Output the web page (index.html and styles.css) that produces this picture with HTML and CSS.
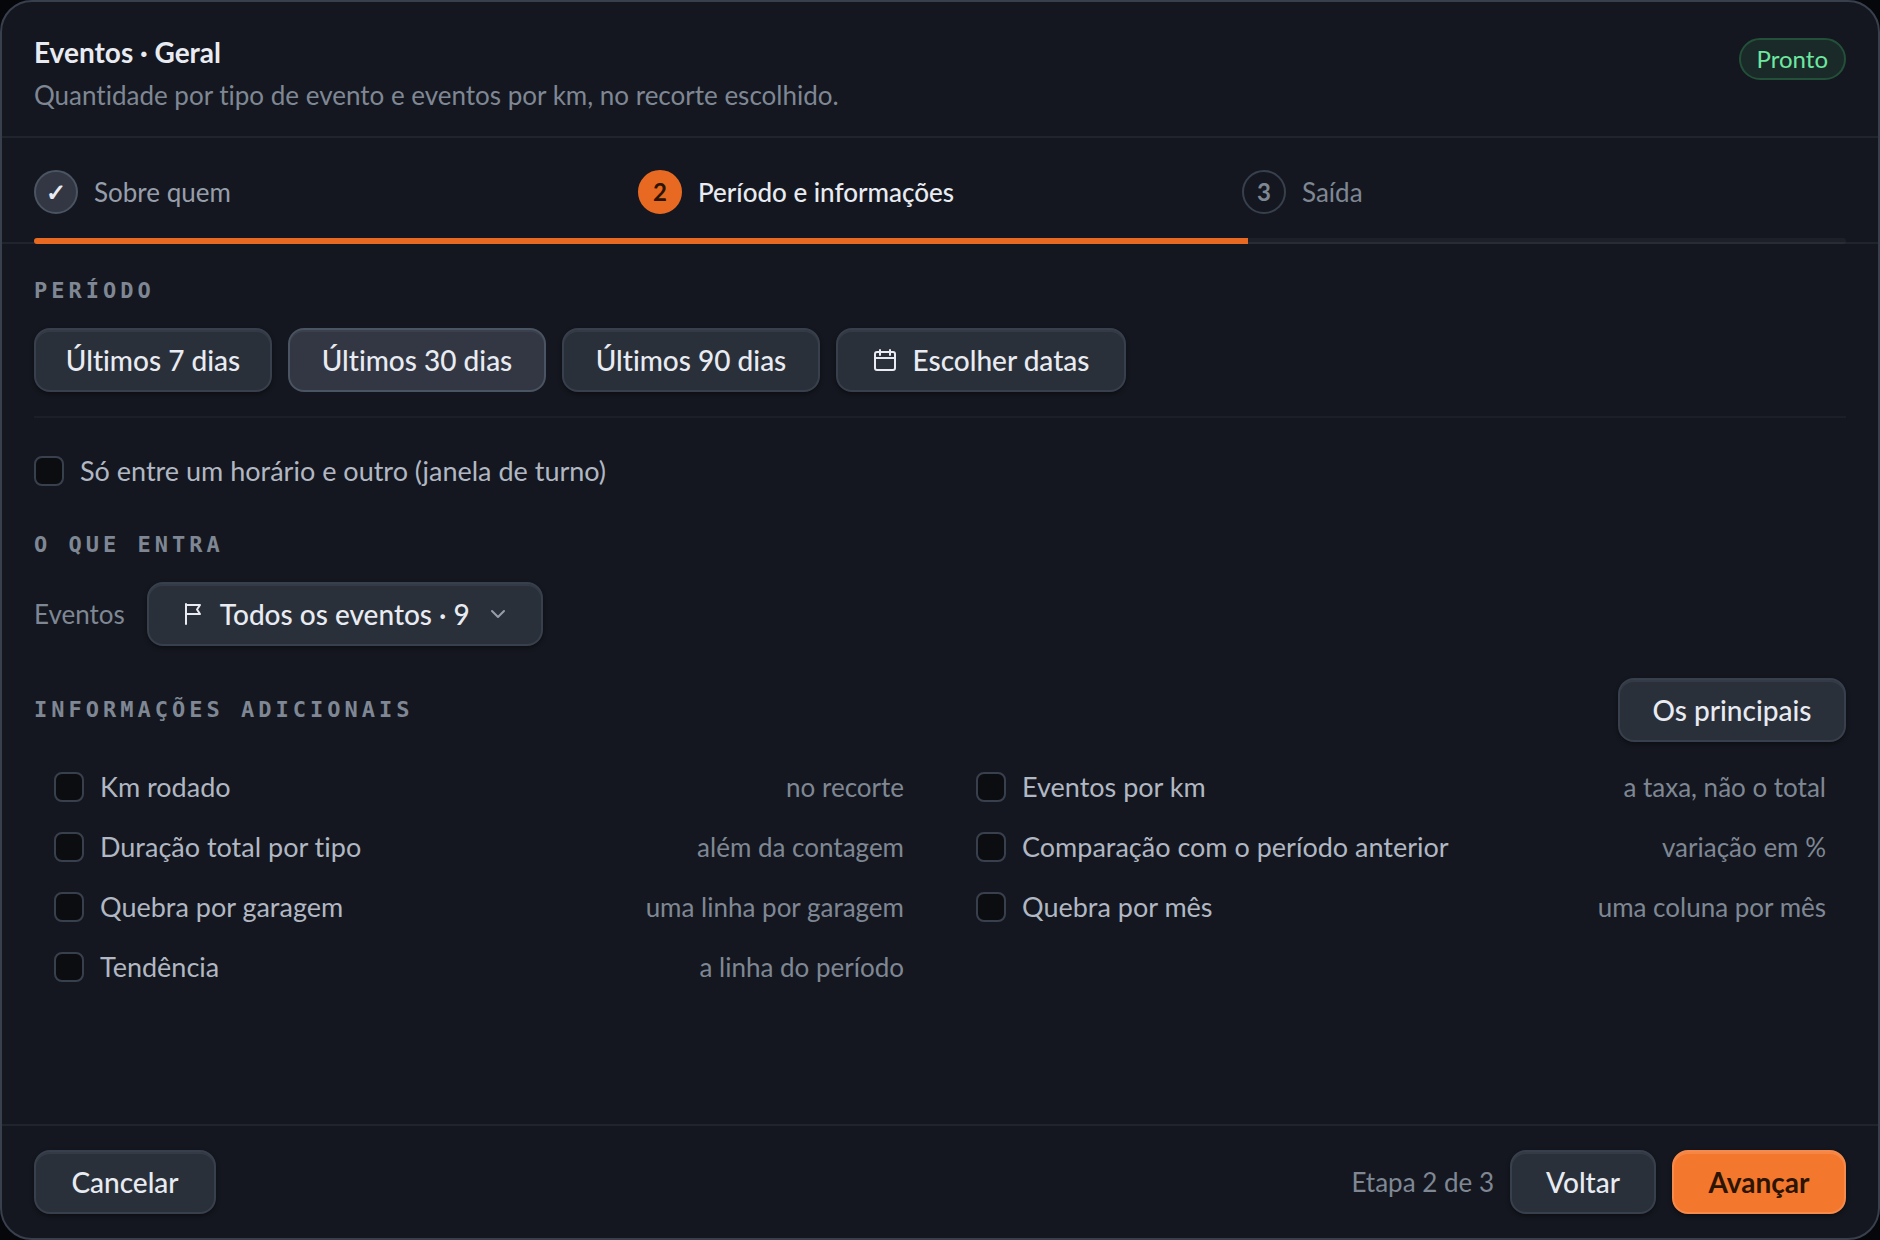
FILE: index.html
```html
<!DOCTYPE html>
<html lang="pt-BR">
<head>
<meta charset="utf-8">
<meta name="viewport" content="width=device-width, initial-scale=1">
<title>Eventos · Geral</title>
<link rel="stylesheet" href="styles.css">
</head>
<body>
<section class="dialog" role="dialog" aria-labelledby="dialog-title">
  <header class="dialog-header">
    <div class="heading">
      <h1 class="title" id="dialog-title">Eventos · Geral</h1>
      <p class="subtitle">Quantidade por tipo de evento e eventos por km, no recorte escolhido.</p>
    </div>
    <span class="badge">Pronto</span>
  </header>

  <nav class="stepper" aria-label="Etapas">
    <ol class="steps">
      <li class="step step-done"><span class="step-mark">✓</span><span>Sobre quem</span></li>
      <li class="step step-current" aria-current="step"><span class="step-mark">2</span><span>Período e informações</span></li>
      <li class="step step-next"><span class="step-mark">3</span><span>Saída</span></li>
    </ol>
    <div class="progress"><div class="progress-fill" style="width: 67%"></div></div>
  </nav>

  <main class="content">
    <section class="period">
      <h2 class="label">Período</h2>
      <div class="button-row">
        <button type="button" class="btn btn-week">Últimos 7 dias</button>
        <button type="button" class="btn btn-range btn-selected" aria-pressed="true">Últimos 30 dias</button>
        <button type="button" class="btn btn-range">Últimos 90 dias</button>
        <button type="button" class="btn btn-dates">
          <svg class="icon" viewBox="0 0 24 24" aria-hidden="true"><rect x="2" y="4" width="20" height="18" rx="2"/><path d="M2 10h20M7 2v5M17 2v5"/></svg>
          Escolher datas
        </button>
      </div>
    </section>

    <label class="check shift"><input type="checkbox" class="box"><span>Só entre um horário e outro (janela de turno)</span></label>

    <section class="included">
      <h2 class="label">O que entra</h2>
      <div class="field">
        <span class="muted" id="events-label">Eventos</span>
        <button type="button" class="btn btn-menu" aria-haspopup="listbox" aria-describedby="events-label">
          <svg class="icon" viewBox="0 0 24 24" aria-hidden="true"><path d="M6 2v20M6 3h14l-3 4.500 3 4.500H6"/></svg>
          <span>Todos os eventos · 9</span>
          <svg class="icon icon-soft" viewBox="0 0 24 24" aria-hidden="true"><path d="M6 9l6 6 6-6"/></svg>
        </button>
      </div>
    </section>

    <section class="extras">
      <div class="extras-head">
        <h2 class="label">Informações adicionais</h2>
        <button type="button" class="btn btn-main-set">Os principais</button>
      </div>
      <div class="options">
        <label class="check option"><input type="checkbox" class="box"><span>Km rodado</span><span class="hint">no recorte</span></label>
        <label class="check option"><input type="checkbox" class="box"><span>Eventos por km</span><span class="hint">a taxa, não o total</span></label>
        <label class="check option"><input type="checkbox" class="box"><span>Duração total por tipo</span><span class="hint">além da contagem</span></label>
        <label class="check option"><input type="checkbox" class="box"><span>Comparação com o período anterior</span><span class="hint">variação em %</span></label>
        <label class="check option"><input type="checkbox" class="box"><span>Quebra por garagem</span><span class="hint">uma linha por garagem</span></label>
        <label class="check option"><input type="checkbox" class="box"><span>Quebra por mês</span><span class="hint">uma coluna por mês</span></label>
        <label class="check option"><input type="checkbox" class="box"><span>Tendência</span><span class="hint">a linha do período</span></label>
      </div>
    </section>
  </main>

  <footer class="dialog-footer">
    <button type="button" class="btn btn-action">Cancelar</button>
    <div class="footer-actions">
      <span class="muted">Etapa 2 de 3</span>
      <button type="button" class="btn btn-back">Voltar</button>
      <button type="button" class="btn btn-primary">Avançar</button>
    </div>
  </footer>
</section>
</body>
</html>
```
FILE: styles.css
```css
:root {
  --surface: #14171f;
  --line: #20242d;
  --border: #39404d;
  --control: #2a3039;
  --text: #e8ebf1;
  --text-soft: #b1b7c3;
  --text-muted: #7f8794;
  --accent: #e86a22;
}

* { box-sizing: border-box; }

body {
  margin: 0;
  background: #06070a;
  color: var(--text-soft);
  font-family: Lato, "Open Sans", sans-serif;
  font-size: 26px;
  font-variant-ligatures: none;
  line-height: 32px;
}

h1, h2, p, ol { margin: 0; padding: 0; }

.dialog {
  display: flex;
  flex-direction: column;
  min-height: 100vh;
  background: var(--surface);
  border: 2px solid var(--border);
  border-radius: 32px;
}

.dialog-header {
  display: flex;
  justify-content: space-between;
  align-items: flex-start;
  padding: 32px 32px 24px;
  border-bottom: 2px solid var(--line);
}

.heading { display: grid; gap: 8px; }

.title {
  color: var(--text);
  font-size: 28px;
  font-weight: 700;
  line-height: 36px;
}

.subtitle { line-height: 34px; }
.subtitle, .muted { color: var(--text-muted); }

.badge {
  margin-top: 4px;
  padding: 4px 16px;
  border: 2px solid #235039;
  border-radius: 21px;
  background: #1a2a28;
  color: #6ee7a0;
  font-size: 24px;
  line-height: 30px;
}

.stepper {
  padding: 32px 32px 0;
  border-bottom: 2px solid var(--line);
}

.steps {
  display: grid;
  grid-template-columns: repeat(3, 1fr);
  list-style: none;
}

.step {
  display: flex;
  align-items: center;
  gap: 16px;
  color: var(--text-muted);
}

.step-mark {
  display: grid;
  place-items: center;
  width: 44px;
  height: 44px;
  border: 2px solid var(--border);
  border-radius: 50%;
  font-size: 24px;
  font-weight: 700;
}

.step-done { color: #979eab; }
.step-done .step-mark { background: #323743; border-color: #4b5463; color: var(--text); }
.step-current { color: var(--text); font-weight: 500; }
.step-current .step-mark { background: var(--accent); border-color: var(--accent); color: #2b1400; }

.progress {
  height: 6px;
  margin: 24px 0 -2px;
  border-radius: 3px;
  background: #ffffff0a;
  overflow: hidden;
}

.progress-fill { height: 100%; background: var(--accent); }

.content { flex: 1; padding: 32px 32px 64px; }

.label {
  color: var(--text-muted);
  font-family: "DejaVu Sans Mono", monospace;
  font-size: 22px;
  font-weight: 700;
  line-height: 30px;
  letter-spacing: 4px;
  text-transform: uppercase;
}

.period {
  display: grid;
  gap: 22px;
  padding-bottom: 24px;
  border-bottom: 2px solid #1b1f27;
}

.button-row { display: flex; flex-wrap: wrap; gap: 16px; }

.btn {
  display: inline-flex;
  align-items: center;
  justify-content: center;
  gap: 16px;
  height: 64px;
  padding: 0 28px;
  border: 2px solid var(--border);
  border-radius: 16px;
  background: var(--control);
  box-shadow: inset 0 2px #353b46, 0 2px 4px #0006;
  color: var(--text);
  font: inherit;
  font-size: 28px;
  font-weight: 500;
  white-space: nowrap;
}

.btn-week { min-width: 238px; }
.btn-range { min-width: 258px; }
.btn-dates { min-width: 290px; }
.btn-menu { min-width: 396px; }
.btn-main-set { min-width: 228px; }
.btn-action { min-width: 182px; }
.btn-back { min-width: 146px; }

.btn-selected { background: #323743; border-color: #4b5463; box-shadow: inset 0 2px #3b404c; }

.btn-primary {
  min-width: 174px;
  border-color: #f68a4c;
  background: #f4772e;
  box-shadow: inset 0 2px #f68644, 0 2px 4px #0006;
  color: #2b1400;
  font-weight: 700;
}

.icon {
  width: 24px;
  height: 24px;
  fill: none;
  stroke: currentColor;
  stroke-width: 2;
  stroke-linecap: round;
  stroke-linejoin: round;
}

.icon-soft { color: #979eab; }

.check { display: flex; align-items: center; gap: 16px; font-size: 27px; }

.box {
  flex: none;
  appearance: none;
  width: 30px;
  height: 30px;
  margin: 0;
  border: 2px solid var(--border);
  border-radius: 8px;
  background: #0c0d11;
}

.shift { width: fit-content; margin: 37px 0 43px; }

.included { display: grid; gap: 22px; }
.field { display: flex; align-items: center; gap: 22px; }

.extras { margin-top: 32px; }
.extras-head { display: flex; justify-content: space-between; align-items: center; }

.options {
  display: grid;
  grid-template-columns: 1fr 1fr;
  column-gap: 32px;
  margin-top: 15px;
}

.option { padding: 14px 20px; }
.hint { margin-left: auto; color: var(--text-muted); font-size: 26px; }

.dialog-footer {
  display: flex;
  justify-content: space-between;
  padding: 24px 32px;
  border-top: 2px solid var(--line);
}

.footer-actions { display: flex; align-items: center; gap: 16px; }
```
